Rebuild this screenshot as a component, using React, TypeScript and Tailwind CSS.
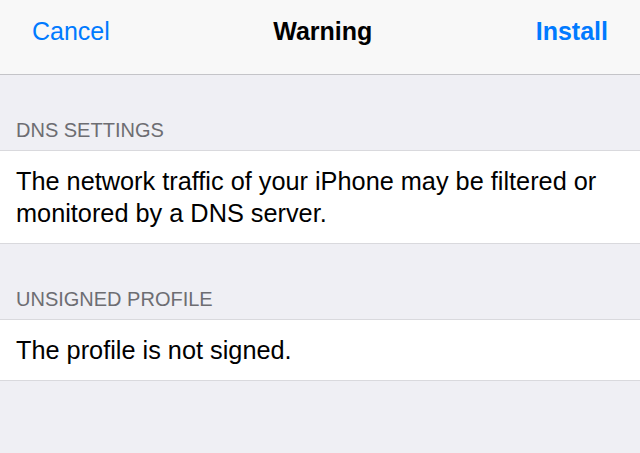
import React from 'react';

const font = { fontFamily: '"Liberation Sans", Arial, sans-serif' };

function SectionLabel({ children }: { children: React.ReactNode }) {
  return (
    <div className="px-4 pt-[43px] pb-[8px] text-[20px] leading-[24px] text-[#6d6d72] uppercase">
      {children}
    </div>
  );
}

function Cell({ children }: { children: React.ReactNode }) {
  return (
    <div className="bg-white border-y border-[#d9d9dd] px-4 py-[14px] text-[25.3px] leading-[32px] text-black">
      {children}
    </div>
  );
}

export default function App() {
  return (
    <div className="w-[640px] h-[453px] overflow-hidden bg-[#efeff4]" style={font}>
      <div className="h-[75px] bg-[#f8f8f8] border-b border-[#c4c4c8] flex items-start justify-between px-8 pt-[16px] text-[25px] leading-[30px]">
        <button className="text-[#007aff]">Cancel</button>
        <div className="font-bold text-black">Warning</div>
        <button className="font-semibold text-[#007aff]">Install</button>
      </div>

      <SectionLabel>DNS Settings</SectionLabel>
      <Cell>The network traffic of your iPhone may be filtered or monitored by a DNS server.</Cell>

      <SectionLabel>Unsigned Profile</SectionLabel>
      <Cell>The profile is not signed.</Cell>
    </div>
  );
}
